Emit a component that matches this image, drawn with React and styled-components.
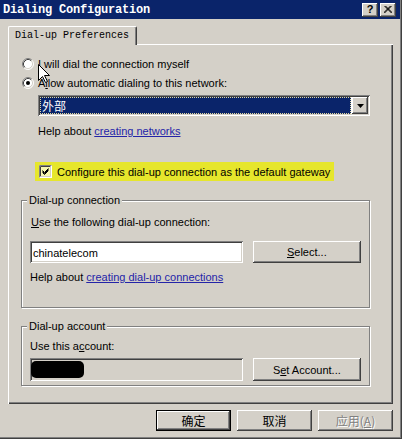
import React from "react";
import styled, { createGlobalStyle } from "styled-components";

const FACE = "#d4d0c8";
const raised = `box-shadow: inset -1px -1px #404040, inset 1px 1px #ffffff, inset -2px -2px #808080, inset 2px 2px ${FACE};`;
const sunken = `box-shadow: inset 1px 1px #808080, inset -1px -1px #ffffff, inset 2px 2px #404040, inset -2px -2px ${FACE};`;

const Global = createGlobalStyle`
  html, body { margin: 0; padding: 0; background: ${FACE}; }
  body { font-family: "Liberation Sans", Arial, sans-serif; font-size: 11px; color: #000; }
  * { box-sizing: border-box; }
`;

const Window = styled.div`
  position: relative;
  width: 402px;
  height: 439px;
  background: ${FACE};
  padding: 0 2px 2px 0;
  box-shadow: inset -1px -1px #404040, inset -2px -2px #808080;
  display: flex;
  flex-direction: column;
  overflow: hidden;
`;

const TitleBar = styled.div`
  height: 19px;
  background: #0a246a;
  display: flex;
  align-items: center;
  justify-content: space-between;
  padding: 0 4px 0 3px;
`;

const Title = styled.span`
  color: #fff;
  font-family: "Liberation Mono", monospace;
  font-weight: bold;
  font-size: 12px;
  letter-spacing: -0.2px;
`;

const TitleButtons = styled.div`
  display: flex;
  gap: 2px;
`;

const TitleButton = styled.div`
  width: 16px;
  height: 14px;
  background: ${FACE};
  ${raised}
  display: flex;
  align-items: center;
  justify-content: center;
  font: bold 11px "Liberation Sans", sans-serif;
  color: #000;
  padding-bottom: 1px;
`;

const Body = styled.div`
  padding: 7px 0 0 8px;
  display: flex;
  flex-direction: column;
`;

const TabStrip = styled.div`
  display: flex;
  position: relative;
  z-index: 1;
  margin-bottom: -1px;
`;

const Tab = styled.div`
  width: 129px;
  height: 19px;
  padding: 0 0 1px 6px;
  background: ${FACE};
  border-top: 1px solid #fff;
  border-left: 1px solid #fff;
  border-right: 1px solid #404040;
  box-shadow: inset -1px 0 #808080;
  border-radius: 2px 2px 0 0;
  display: flex;
  align-items: center;
  font: 10px "Liberation Mono", monospace;
`;

const Panel = styled.div`
  width: 385px;
  height: 360px;
  padding: 1px;
  box-shadow: inset 1px 1px #fff, inset -1px -1px #404040, inset -2px -2px #808080;
  display: flex;
  flex-direction: column;
  align-items: flex-start;
`;

const RadioRow = styled.div`
  margin: ${(p) => p.$top}px 0 0 13px;
  height: 16px;
  display: flex;
  align-items: center;
  gap: 4px;
  line-height: 14px;
`;

const Key = styled.span`
  text-decoration: underline;
`;

const Combo = styled.div`
  margin: 4px 0 0 29px;
  width: 332px;
  height: 21px;
  background: #fff;
  ${sunken}
  padding: 2px;
  display: flex;
`;

const ComboValue = styled.div`
  flex: 1;
  background: #0a246a;
  color: #fff;
  outline: 1px dotted #e0d8a0;
  outline-offset: -1px;
  font: 12px "Noto Sans CJK SC", sans-serif;
  padding-left: 2px;
  margin-right: 1px;
  display: flex;
  align-items: center;
`;

const ComboArrow = styled.div`
  width: 16px;
  background: ${FACE};
  ${raised}
  display: flex;
  align-items: center;
  justify-content: center;
`;

const TextLine = styled.div`
  margin: ${(p) => p.$top}px 0 0 ${(p) => p.$left || 0}px;
  line-height: 14px;
  white-space: nowrap;
`;

const Link = styled.span`
  color: #2424a8;
  text-decoration: underline;
`;

const Highlight = styled.div`
  margin: 24px 0 0 26px;
  height: 19px;
  background: #e6e62c;
  display: flex;
  align-items: center;
  gap: 5px;
  padding: 0 4px 0 4px;
  line-height: 14px;
`;

const Group = styled.fieldset`
  margin: ${(p) => p.$top}px 0 0 12px;
  width: 349px;
  min-width: 0;
  padding: 0 8px ${(p) => p.$pb}px 8px;
  border: 1px solid #808080;
  box-shadow: inset 1px 1px #fff, 1px 1px #fff;
`;

const Legend = styled.legend`
  padding: 0 2px;
  margin-left: -3px;
  line-height: 14px;
  background: ${FACE};
`;

const FieldRow = styled.div`
  margin-top: ${(p) => p.$top}px;
  display: flex;
  gap: 10px;
`;

const TextField = styled.div`
  width: 214px;
  height: ${(p) => p.$h}px;
  background: ${(p) => (p.$disabled ? FACE : "#fff")};
  ${sunken}
  padding: 2px 3px 0 3px;
  display: flex;
  align-items: ${(p) => (p.$disabled ? "flex-start" : "center")};
  line-height: 14px;
`;

const Redaction = styled.div`
  width: 53px;
  height: 17px;
  margin: 1px 0 0 -2px;
  background: #000;
  border-radius: 5px;
`;

const Button = styled.div`
  width: ${(p) => p.$w}px;
  height: ${(p) => p.$h}px;
  background: ${FACE};
  ${raised}
  display: flex;
  align-items: center;
  justify-content: center;
  line-height: 14px;
`;

const ButtonRow = styled.div`
  margin-top: 6px;
  width: 385px;
  display: flex;
  justify-content: flex-end;
  gap: 6px;
`;

const DialogButton = styled.div`
  width: 75px;
  height: 21px;
  background: ${FACE};
  display: flex;
  align-items: center;
  justify-content: center;
  font: 12px "Noto Sans CJK SC", sans-serif;
  ${(p) =>
    p.$default
      ? `border: 1px solid #000; box-shadow: inset -1px -1px #404040, inset 1px 1px #fff, inset -2px -2px #808080;`
      : raised}
  color: ${(p) => (p.$disabled ? "#808080" : "#000")};
  text-shadow: ${(p) => (p.$disabled ? "1px 1px #fff" : "none")};
`;

const Cursor = styled.svg`
  position: absolute;
  left: 38px;
  top: 64px;
`;

function Radio({ checked }) {
  return (
    <svg width="12" height="12" viewBox="0 0 12 12">
      <circle cx="6" cy="6" r="5" fill="#fff" />
      <path d="M2.11 9.89 A5.5 5.5 0 0 1 9.89 2.11" fill="none" stroke="#808080" />
      <path d="M9.89 2.11 A5.5 5.5 0 0 1 2.11 9.89" fill="none" stroke="#fff" />
      <path d="M2.82 9.18 A4.5 4.5 0 0 1 9.18 2.82" fill="none" stroke="#404040" />
      <path d="M9.18 2.82 A4.5 4.5 0 0 1 2.82 9.18" fill="none" stroke={FACE} />
      {checked && <circle cx="6" cy="6" r="2" fill="#000" />}
    </svg>
  );
}

function Checkbox() {
  return (
    <svg width="13" height="13" viewBox="0 0 13 13">
      <rect x="0" y="0" width="13" height="13" fill="#fff" />
      <rect x="2" y="2" width="9" height="9" fill="#f6f6b0" />
      <path d="M0.5 12.5 V0.5 H12.5" fill="none" stroke="#808080" />
      <path d="M1.5 11.5 V1.5 H11.5" fill="none" stroke="#404040" />
      <path d="M1.5 11.5 H11.5 V1.5" fill="none" stroke={FACE} />
      <path d="M3.5 5.5 L5.5 7.5 L9.5 3.5 M3.5 6.5 L5.5 8.5 L9.5 4.5 M3.5 7.5 L5.5 9.5 L9.5 5.5" fill="none" stroke="#000" />
    </svg>
  );
}

export default function App() {
  return (
    <>
      <Global />
      <Window>
        <TitleBar>
          <Title>Dialing Configuration</Title>
          <TitleButtons>
            <TitleButton>?</TitleButton>
            <TitleButton>
              <svg width="8" height="7" viewBox="0 0 8 7">
                <path d="M0.5 0 L7.5 7 M1.5 0 L8.5 7 M7.5 0 L0.5 7 M6.5 0 L-0.5 7" stroke="#000" strokeWidth="1" />
              </svg>
            </TitleButton>
          </TitleButtons>
        </TitleBar>
        <Body>
          <TabStrip>
            <Tab>Dial-up Preferences</Tab>
          </TabStrip>
          <Panel>
            <RadioRow $top={11}>
              <Radio />
              <span>
                <Key>I</Key> will dial the connection myself
              </span>
            </RadioRow>
            <RadioRow $top={3}>
              <Radio checked />
              <span>
                A<Key>l</Key>low automatic dialing to this network:
              </span>
            </RadioRow>
            <Combo>
              <ComboValue>外部</ComboValue>
              <ComboArrow>
                <svg width="7" height="4" viewBox="0 0 7 4">
                  <polygon points="0,0 7,0 3.5,4" fill="#000" />
                </svg>
              </ComboArrow>
            </Combo>
            <TextLine $top={8} $left={29}>
              Help about <Link>creating networks</Link>
            </TextLine>
            <Highlight>
              <Checkbox />
              <span>
                Configure this dial-up connection as the default <Key>g</Key>ateway
              </span>
            </Highlight>
            <Group $top={12} $pb={23}>
              <Legend>Dial-up connection</Legend>
              <TextLine $top={8} $left={1}>
                <Key>U</Key>se the following dial-up connection:
              </TextLine>
              <FieldRow $top={12}>
                <TextField $h={22}>chinatelecom</TextField>
                <Button $w={109} $h={22}>
                  <span>
                    <Key>S</Key>elect...
                  </span>
                </Button>
              </FieldRow>
              <TextLine $top={7}>
                Help about <Link>creating dial-up connections</Link>
              </TextLine>
            </Group>
            <Group $top={11} $pb={4}>
              <Legend>Dial-up account</Legend>
              <TextLine $top={6}>
                Use this a<Key>c</Key>count:
              </TextLine>
              <FieldRow $top={5}>
                <TextField $h={23} $disabled>
                  <Redaction />
                </TextField>
                <Button $w={109} $h={23}>
                  <span>
                    S<Key>e</Key>t Account...
                  </span>
                </Button>
              </FieldRow>
            </Group>
          </Panel>
          <ButtonRow>
            <DialogButton $default>确定</DialogButton>
            <DialogButton>取消</DialogButton>
            <DialogButton $disabled>
              应用(<Key>A</Key>)
            </DialogButton>
          </ButtonRow>
        </Body>
        <Cursor width="13" height="20" viewBox="0 0 13 20">
          <path d="M0.5 0.5 L0.5 16.5 L4.5 12.5 L7.5 18.5 L9.5 17.5 L6.5 11.5 L11.5 11.5 Z" fill="#fff" stroke="#000" />
        </Cursor>
      </Window>
    </>
  );
}
